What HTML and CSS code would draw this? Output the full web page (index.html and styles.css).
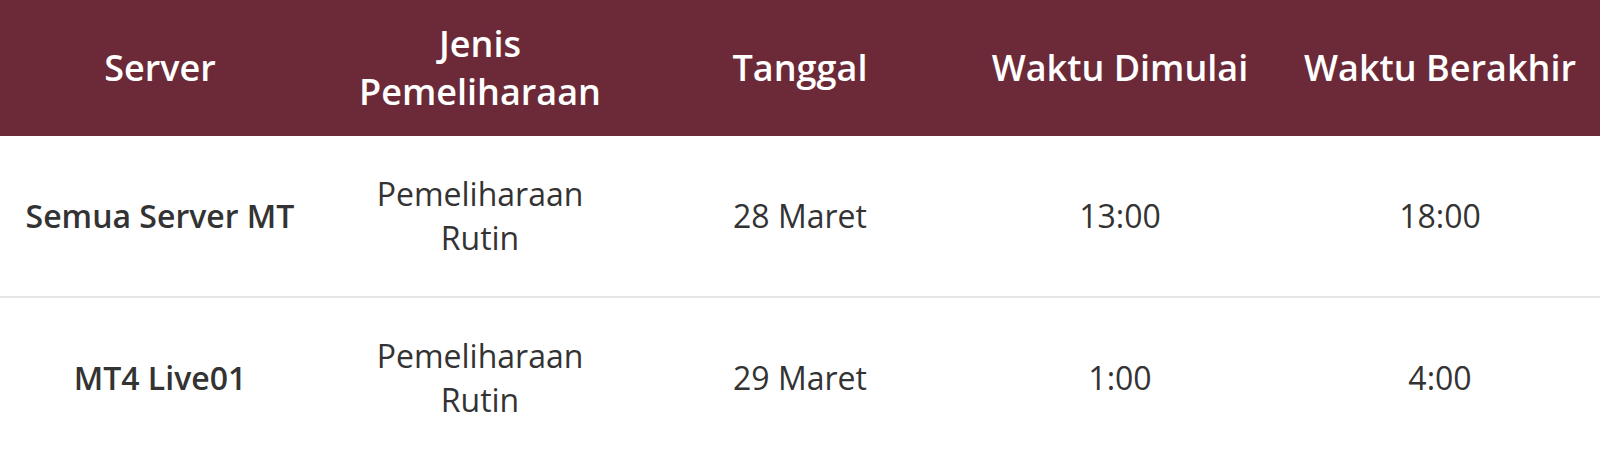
FILE: index.html
```html
<!DOCTYPE html>
<html lang="id">
<head>
<meta charset="utf-8">
<title>Jadwal Pemeliharaan</title>
<link rel="stylesheet" href="styles.css">
</head>
<body>
<table class="schedule">
  <thead>
    <tr>
      <th>Server</th>
      <th>Jenis<br>Pemeliharaan</th>
      <th>Tanggal</th>
      <th>Waktu Dimulai</th>
      <th>Waktu Berakhir</th>
    </tr>
  </thead>
  <tbody>
    <tr>
      <td class="server">Semua Server MT</td>
      <td>Pemeliharaan<br>Rutin</td>
      <td>28 Maret</td>
      <td>13:00</td>
      <td>18:00</td>
    </tr>
    <tr>
      <td class="server">MT4 Live01</td>
      <td>Pemeliharaan<br>Rutin</td>
      <td>29 Maret</td>
      <td>1:00</td>
      <td>4:00</td>
    </tr>
  </tbody>
</table>
</body>
</html>
```

FILE: styles.css
```css
html, body {
  margin: 0;
  padding: 0;
  background: #ffffff;
}

body {
  font-family: "Open Sans", "Noto Sans", sans-serif;
  color: #333333;
}

.schedule {
  width: 100%;
  border-collapse: collapse;
  table-layout: fixed;
}

.schedule th {
  background: #6c2a38;
  color: #ffffff;
  font-size: 36px;
  font-weight: 600;
  line-height: 48px;
  padding: 20px 0;
  text-align: center;
  vertical-align: middle;
}

.schedule td {
  font-size: 32px;
  font-weight: 400;
  line-height: 44px;
  padding: 36px 0;
  text-align: center;
  vertical-align: middle;
  border-bottom: 2px solid #e6e6e6;
}

.schedule td.server {
  font-weight: 600;
}
```
